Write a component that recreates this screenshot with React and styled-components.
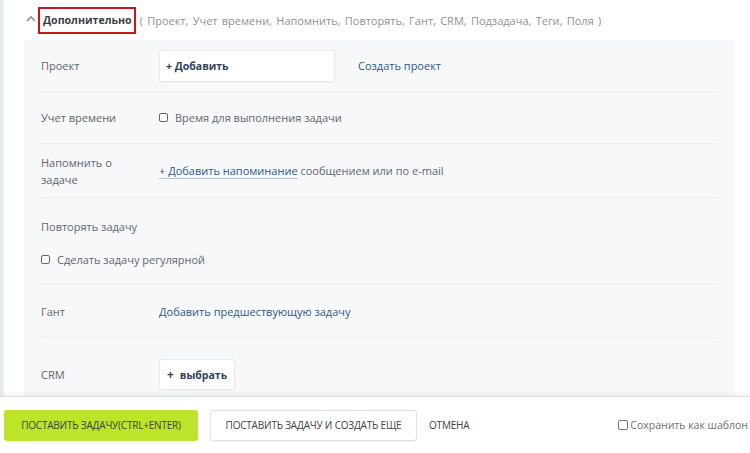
import React from 'react';
import styled, { createGlobalStyle } from 'styled-components';

const GlobalStyle = createGlobalStyle`
  html, body {
    margin: 0;
    padding: 0;
    background: #ffffff;
  }
  body {
    font-family: "Open Sans", "Noto Sans", sans-serif;
    font-size: 11px;
    color: #5d6670;
  }
`;

const extras = ['Проект', 'Учет времени', 'Напомнить', 'Повторять', 'Гант', 'CRM', 'Подзадача', 'Теги', 'Поля'];

export default function App() {
  return (
    <>
      <GlobalStyle />
      <Page>
        <Scroller>
          <Section>
            <Header>
              <Chevron width="10" height="7" viewBox="0 0 10 7">
                <polyline points="1,6 5,2 9,6" fill="none" stroke="#8a9098" strokeWidth="1.6" />
              </Chevron>
              <Marked>Дополнительно</Marked>
              <Extras>
                ({' '}
                {extras.map((e, i) => (
                  <span key={e}>
                    {e}
                    {i < extras.length - 1 ? ', ' : ' '}
                  </span>
                ))}
                )
              </Extras>
            </Header>
            <Panel>
              <Row>
                <Label>Проект</Label>
                <Control>
                  <InputButton>+ Добавить</InputButton>
                  <Link>Создать проект</Link>
                </Control>
              </Row>
              <Row>
                <Label>Учет времени</Label>
                <Control>
                  <Check>
                    <Box />
                    Время для выполнения задачи
                  </Check>
                </Control>
              </Row>
              <Row height={54}>
                <Label>
                  Напомнить о<br />задаче
                </Label>
                <Control>
                  <Plain>
                    <Link dotted>+ Добавить напоминание</Link> сообщением или по e-mail
                  </Plain>
                </Control>
              </Row>
              <StackRow>
                <Label>Повторять задачу</Label>
                <Check>
                  <Box />
                  Сделать задачу регулярной
                </Check>
              </StackRow>
              <Row height={53}>
                <Label>Гант</Label>
                <Control>
                  <Link>Добавить предшествующую задачу</Link>
                </Control>
              </Row>
              <Row last>
                <Label>CRM</Label>
                <Control>
                  <SmallButton>
                    <span>+</span> выбрать
                  </SmallButton>
                </Control>
              </Row>
            </Panel>
          </Section>
        </Scroller>
        <Footer>
          <PrimaryButton>ПОСТАВИТЬ ЗАДАЧУ(CTRL+ENTER)</PrimaryButton>
          <SecondaryButton>ПОСТАВИТЬ ЗАДАЧУ И СОЗДАТЬ ЕЩЕ</SecondaryButton>
          <CancelLink>ОТМЕНА</CancelLink>
          <Spacer />
          <TemplateCheck>
            <FooterBox />
            Сохранить как шаблон
          </TemplateCheck>
        </Footer>
      </Page>
    </>
  );
}

const Page = styled.div`
  width: 750px;
  height: 453px;
  display: flex;
  flex-direction: column;
  overflow: hidden;
`;

const Scroller = styled.div`
  flex: 1;
  overflow: hidden;
  border-left: 3px solid #e6ecea;
  display: flex;
`;

const Section = styled.div`
  flex: 1;
  border-left: 1px solid #eef3f1;
  padding: 0 15px 0 20px;
  display: flex;
  flex-direction: column;
`;

const Header = styled.div`
  height: 40px;
  display: flex;
  align-items: center;
  padding-left: 2px;
`;

const Chevron = styled.svg`
  margin-right: 2px;
  margin-top: -4px;
`;

const Marked = styled.span`
  border: 2px solid #c8161d;
  padding: 4px 2px 5px 3px;
  font-weight: 700;
  font-size: 10.6px;
  color: #3a3f45;
`;

const Extras = styled.span`
  margin-left: 4px;
  color: #8b9299;
  font-size: 11px;
  word-spacing: 1.4px;
`;

const Panel = styled.div`
  flex: 1;
  background: #f7f8fa;
  border-radius: 4px 4px 0 0;
  padding: 0 18px 0 17px;
`;

const Row = styled.div`
  display: flex;
  align-items: center;
  min-height: ${({ last, height }) => (last ? 0 : height || 52)}px;
  padding-top: ${({ last }) => (last ? '21px' : '0')};
  box-sizing: border-box;
  border-bottom: ${({ last }) => (last ? 'none' : '1px solid #eceef1')};
`;

const StackRow = styled.div`
  display: flex;
  flex-direction: column;
  gap: 16px;
  padding: 20px 0 16px;
  border-bottom: 1px solid #eceef1;
`;

const Label = styled.div`
  width: 118px;
  flex-shrink: 0;
  color: #5d6670;
  font-size: 11px;
  line-height: 17px;
`;

const Control = styled.div`
  display: flex;
  align-items: center;
`;

const InputButton = styled.div`
  width: 176px;
  height: 32px;
  box-sizing: border-box;
  background: #ffffff;
  border: 1px solid #e7e9ec;
  border-radius: 3px;
  box-shadow: 0 1px 2px rgba(0, 0, 0, 0.05);
  display: flex;
  align-items: center;
  padding-left: 6px;
  font-weight: 700;
  font-size: 10.5px;
  color: #2f4159;
  margin-right: 23px;
`;

const Link = styled.span`
  color: #2c5888;
  font-size: 11px;
  border-bottom: ${({ dotted }) => (dotted ? '1px solid #b9c5d3' : 'none')};
`;

const Plain = styled.span`
  color: #5d6670;
  font-size: 11px;
`;

const Check = styled.label`
  display: flex;
  align-items: center;
  color: #5d6670;
  font-size: 11px;
  line-height: 17px;
`;

const Box = styled.span`
  width: 7px;
  height: 7px;
  border: 1.5px solid #5f656c;
  border-radius: 2px;
  margin-right: 7px;
  background: #ffffff;
`;

const SmallButton = styled.div`
  width: 76px;
  height: 31px;
  box-sizing: border-box;
  background: #ffffff;
  border: 1px solid #e7e9ec;
  border-radius: 3px;
  box-shadow: 0 1px 2px rgba(0, 0, 0, 0.05);
  display: flex;
  align-items: center;
  justify-content: center;
  gap: 6px;
  font-weight: 700;
  font-size: 10.5px;
  color: #2f4159;

  span {
    font-size: 12px;
  }
`;

const Footer = styled.div`
  height: 56px;
  flex-shrink: 0;
  display: flex;
  align-items: center;
  padding: 0 2px 0 4px;
  background: #ffffff;
  border-top: 1px solid #dcdfe2;
  box-shadow: 0 -2px 3px rgba(0, 0, 0, 0.06);
`;

const FooterText = styled.div`
  font-size: 10px;
  letter-spacing: -0.2px;
  color: #3b4148;
`;

const PrimaryButton = styled(FooterText)`
  width: 194px;
  height: 31px;
  display: flex;
  align-items: center;
  justify-content: center;
  background: #bde42b;
  border-radius: 3px;
  color: #3b4532;
`;

const SecondaryButton = styled(FooterText)`
  margin-left: 12px;
  width: 207px;
  height: 31px;
  box-sizing: border-box;
  display: flex;
  align-items: center;
  justify-content: center;
  border: 1px solid #dfe2e5;
  border-radius: 3px;
  box-shadow: 0 1px 2px rgba(0, 0, 0, 0.06);
`;

const CancelLink = styled(FooterText)`
  margin-left: 12px;
`;

const Spacer = styled.div`
  flex: 1;
`;

const TemplateCheck = styled.label`
  display: flex;
  align-items: center;
  font-size: 10.5px;
  color: #6a7077;
  margin-top: -1px;
`;

const FooterBox = styled.span`
  width: 8px;
  height: 8px;
  border: 1px solid #6f757b;
  border-radius: 2px;
  margin-right: 2px;
`;
